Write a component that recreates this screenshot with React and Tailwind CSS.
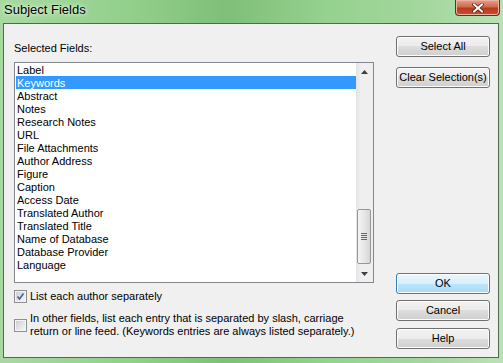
const FIELDS = [
  "Label",
  "Keywords",
  "Abstract",
  "Notes",
  "Research Notes",
  "URL",
  "File Attachments",
  "Author Address",
  "Figure",
  "Caption",
  "Access Date",
  "Translated Author",
  "Translated Title",
  "Name of Database",
  "Database Provider",
  "Language",
];

const DlgButton = ({ children, primary, className = "" }) => (
  <div
    className={
      "h-[21px] w-full flex items-center justify-center rounded-[3px] border text-[11px] text-black " +
      (primary
        ? "border-[#3c7fb1] bg-[linear-gradient(#eaf6fd_0%,#d9f0fc_50%,#bee6fd_50%,#a7d9f5_100%)] shadow-[inset_0_0_0_1px_#ffffff] "
        : "border-[#707070] bg-[linear-gradient(#f2f2f2_0%,#ebebeb_50%,#dddddd_50%,#cfcfcf_100%)] shadow-[inset_0_0_0_1px_#fcfcfc] ") +
      className
    }
  >
    {children}
  </div>
);

const CheckBox = ({ checked }) => (
  <div className="w-[13px] h-[13px] shrink-0 border border-[#8e8f8f] bg-[#f4f4f4] p-[1px]">
    <div className="w-full h-full bg-[linear-gradient(135deg,#cbcfd5,#f6f6f6)] flex items-center justify-center">
      {checked && (
        <svg width="9" height="9" viewBox="0 0 9 9">
          <path d="M1.5 4.5 L3.5 7 L7.5 1.5" fill="none" stroke="#4a5f97" strokeWidth="1.6" />
        </svg>
      )}
    </div>
  </div>
);

const ScrollBar = () => (
  <div className="w-[17px] shrink-0 flex flex-col bg-[linear-gradient(90deg,#e3e3e3,#f0f0f0_30%,#eeeeee)]">
    <div className="h-[17px] flex items-center justify-center">
      <svg width="7" height="4" viewBox="0 0 7 4">
        <path d="M3.5 0 L7 4 L0 4 Z" fill="#404040" />
      </svg>
    </div>
    <div className="flex-1 flex flex-col justify-end pb-[1px]">
      <div className="h-[55px] ml-[1px] mr-[2px] rounded-[2px] border border-[#979797] bg-[linear-gradient(90deg,#f4f4f4,#e7e7e7_50%,#d6d6d6)] flex flex-col items-center justify-center gap-[1px]">
        <div className="w-[6px] h-[1px] bg-[#666]" />
        <div className="w-[6px] h-[1px] bg-[#666]" />
        <div className="w-[6px] h-[1px] bg-[#666]" />
        <div className="w-[6px] h-[1px] bg-[#666]" />
      </div>
    </div>
    <div className="h-[17px] flex items-center justify-center">
      <svg width="7" height="4" viewBox="0 0 7 4">
        <path d="M0 0 L7 0 L3.5 4 Z" fill="#404040" />
      </svg>
    </div>
  </div>
);

export default function App() {
  return (
    <div
      className="w-[503px] h-[363px] flex flex-col overflow-hidden bg-[linear-gradient(90deg,#a8d9a1_0%,#93d08c_25%,#7fbf79_45%,#95d18f_65%,#a4d79e_85%,#b9e2b4_100%)]"
      style={{ fontFamily: '"Liberation Sans", Arial, sans-serif' }}
    >
      <div className="h-[23px] shrink-0 flex items-start justify-between pl-[4px] pr-[3px]">
        <div className="pt-[2px] text-[13px] leading-[16px] text-black [text-shadow:0_0_6px_#e6f5e3,0_0_3px_#e6f5e3]">
          Subject Fields
        </div>
        <div className="w-[45px] h-[16px] rounded-b-[4px] border border-t-0 border-[#6b2a1c] bg-[linear-gradient(#e7a08e_0%,#d06a4e_45%,#b83a1c_55%,#c8502e_100%)] shadow-[inset_0_0_0_1px_#eab3a3] flex items-center justify-center">
          <svg width="12" height="10" viewBox="0 0 12 10">
            <path d="M2 1.5 L10 8.5 M10 1.5 L2 8.5" stroke="#4a1a10" strokeWidth="3.4" strokeLinecap="square" />
            <path d="M2 1.5 L10 8.5 M10 1.5 L2 8.5" stroke="#ffffff" strokeWidth="2" strokeLinecap="square" />
          </svg>
        </div>
      </div>
      <div className="ml-[3px] mr-[4px] h-[335px] border border-[#4f6b4c] bg-[#f0f0f0] flex text-[11px] text-black">
        <div className="pl-[10px] pt-[17px] flex flex-col">
          <div className="h-[14px] leading-[15px] mb-[7px]">Selected Fields:</div>
          <div className="w-[360px] h-[221px] border border-[#828790] bg-white flex">
            <div className="flex-1 flex flex-col">
              {FIELDS.map((f, i) => (
                <div
                  key={f}
                  className={
                    "h-[13px] leading-[15px] overflow-hidden ml-[1px] pl-[1px] whitespace-nowrap " +
                    (i === 1 ? "bg-[#3399ff] text-white" : "")
                  }
                >
                  {f}
                </div>
              ))}
            </div>
            <ScrollBar />
          </div>
          <div className="mt-[7px] flex items-center gap-[3px] h-[13px]">
            <CheckBox checked />
            <span className="leading-[13px]">List each author separately</span>
          </div>
          <div className="mt-[9px] flex items-center gap-[3px]">
            <CheckBox />
            <span className="leading-[13px]">
              In other fields, list each entry that is separated by slash, carriage
              <br />
              return or line feed. (Keywords entries are always listed separately.)
            </span>
          </div>
        </div>
        <div className="ml-[22px] w-[94px] pt-[12px] pb-[8px] flex flex-col justify-between">
          <div className="flex flex-col gap-[10px]">
            <DlgButton>Select All</DlgButton>
            <DlgButton>Clear Selection(s)</DlgButton>
          </div>
          <div className="flex flex-col gap-[6px]">
            <DlgButton primary>OK</DlgButton>
            <DlgButton>Cancel</DlgButton>
            <DlgButton className="mt-[1px]">Help</DlgButton>
          </div>
        </div>
      </div>
    </div>
  );
}
